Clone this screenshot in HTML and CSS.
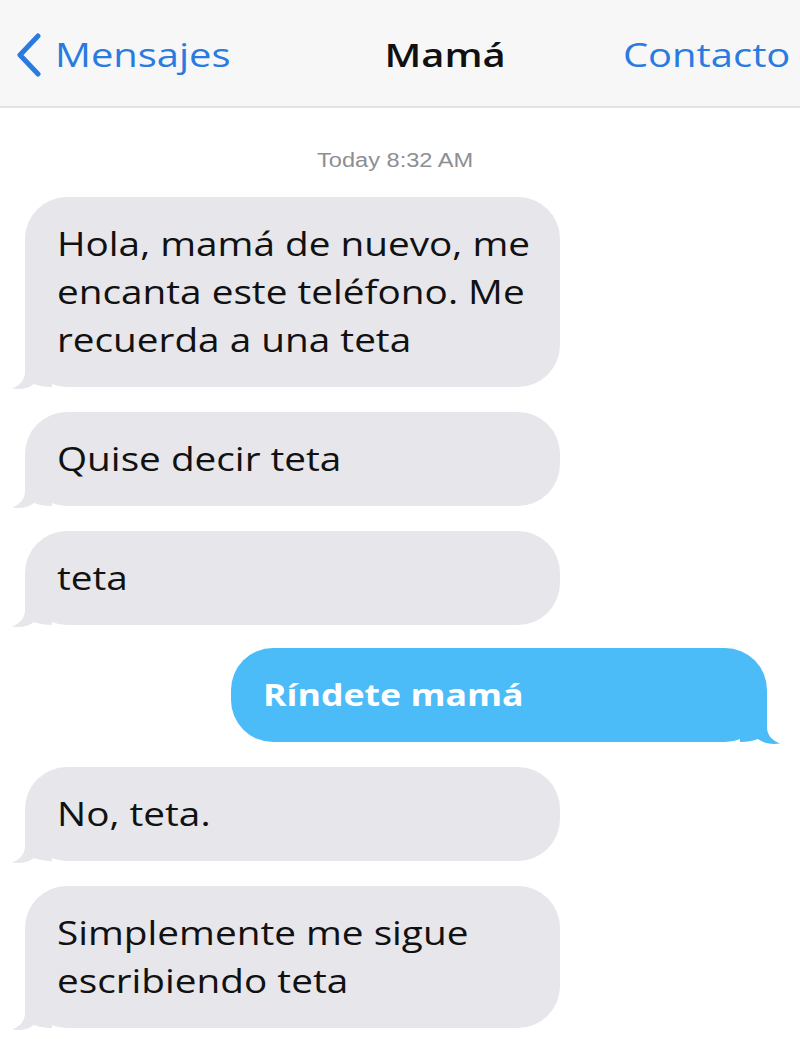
FILE: index.html
```html
<!DOCTYPE html>
<html lang="es">
<head>
<meta charset="utf-8">
<title>Mamá</title>
<link rel="stylesheet" href="styles.css">
</head>
<body>
<header class="nav">
  <a class="nav-back">
    <svg class="chev" width="30" height="44" viewBox="0 0 30 44"><path d="M25 3 L7 22 L25 41" fill="none" stroke="#2a7be0" stroke-width="5" stroke-linecap="round" stroke-linejoin="round"/></svg>
    <span class="t">Mensajes</span>
  </a>
  <div class="nav-title"><span class="t">Mamá</span></div>
  <a class="nav-action"><span class="t">Contacto</span></a>
</header>
<main class="chat">
  <div class="stamp"><span class="t">Today 8:32 AM</span></div>
  <div class="msg in">
    <div class="bubble"><span class="t">Hola, mamá de nuevo, me<br>encanta este teléfono. Me<br>recuerda a una teta</span></div>
    <svg class="tail" width="40" height="48" viewBox="0 0 40 48"><path d="M13 0 L13 30 C13 38 8 43.5 0 46.5 C9 48 17 46 22 42 C27 44 33 45 40 45 L40 0 Z"/></svg>
  </div>
  <div class="msg in">
    <div class="bubble"><span class="t">Quise decir teta</span></div>
    <svg class="tail" width="40" height="48" viewBox="0 0 40 48"><path d="M13 0 L13 30 C13 38 8 43.5 0 46.5 C9 48 17 46 22 42 C27 44 33 45 40 45 L40 0 Z"/></svg>
  </div>
  <div class="msg in">
    <div class="bubble"><span class="t">teta</span></div>
    <svg class="tail" width="40" height="48" viewBox="0 0 40 48"><path d="M13 0 L13 30 C13 38 8 43.5 0 46.5 C9 48 17 46 22 42 C27 44 33 45 40 45 L40 0 Z"/></svg>
  </div>
  <div class="msg out">
    <div class="bubble"><span class="t">Ríndete mamá</span></div>
    <svg class="tail" width="40" height="48" viewBox="0 0 40 48"><path d="M13 0 L13 30 C13 38 8 43.5 0 46.5 C9 48 17 46 22 42 C27 44 33 45 40 45 L40 0 Z"/></svg>
  </div>
  <div class="msg in">
    <div class="bubble"><span class="t">No, teta.</span></div>
    <svg class="tail" width="40" height="48" viewBox="0 0 40 48"><path d="M13 0 L13 30 C13 38 8 43.5 0 46.5 C9 48 17 46 22 42 C27 44 33 45 40 45 L40 0 Z"/></svg>
  </div>
  <div class="msg in">
    <div class="bubble"><span class="t">Simplemente me sigue<br>escribiendo teta</span></div>
    <svg class="tail" width="40" height="48" viewBox="0 0 40 48"><path d="M13 0 L13 30 C13 38 8 43.5 0 46.5 C9 48 17 46 22 42 C27 44 33 45 40 45 L40 0 Z"/></svg>
  </div>
</main>
</body>
</html>
```
FILE: styles.css
```css
* { box-sizing: border-box; }
html, body { margin: 0; padding: 0; background: #ffffff; }
body {
  width: 800px;
  height: 1039px;
  overflow: hidden;
  font-family: "Open Sans", "Noto Sans", sans-serif;
}
.t {
  display: inline-block;
  transform: scaleX(1.21);
  transform-origin: 0 50%;
  white-space: nowrap;
}
.nav {
  height: 108px;
  background: #f7f7f7;
  border-bottom: 2px solid #e2e2e2;
  display: flex;
  align-items: center;
  padding: 3px 10px 0 15px;
  font-size: 33px;
}
.nav-back {
  display: flex;
  align-items: center;
  gap: 12px;
  color: #2a7be0;
}
.chev { display: block; margin-left: -2px; }
.nav-title {
  color: #111;
  font-weight: 600;
  margin-left: auto;
  padding-left: 39px;
}
.nav-title .t { transform-origin: 50% 50%; }
.nav-action {
  color: #2a7be0;
  margin-left: auto;
}
.nav-action .t { transform-origin: 100% 50%; }
.chat {
  display: flex;
  flex-direction: column;
  padding: 0 0 0 25px;
}
.stamp {
  font-family: "Liberation Sans", Arial, sans-serif;
  font-size: 19.5px;
  color: #8e8e93;
  align-self: flex-start;
  margin: 41px 0 26px 292px;
  line-height: 22px;
}
.msg {
  position: relative;
  width: 535px;
  margin-bottom: 25px;
}
.msg.out {
  margin-left: 206px;
  margin-top: -2px;
  width: 536px;
}
.bubble {
  position: relative;
  z-index: 1;
  border-radius: 42px;
  padding: 23px 20px 23px 32px;
  font-size: 32px;
  line-height: 48px;
  color: #111;
  background: #e6e6eb;
}
.tail {
  position: absolute;
  left: -13px;
  bottom: -3px;
  z-index: 0;
  fill: #e6e6eb;
}
.msg.out .bubble {
  background: #4bbcf8;
  color: #ffffff;
  font-weight: 700;
  font-size: 29.5px;
}
.msg.out .tail {
  left: auto;
  right: -13px;
  fill: #4bbcf8;
  transform: scaleX(-1);
}
```
